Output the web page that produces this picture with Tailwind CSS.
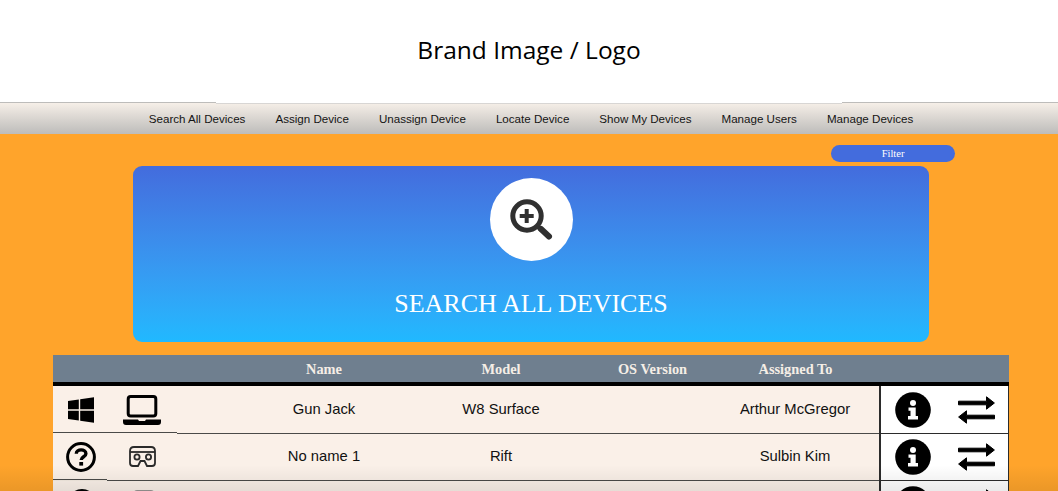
<!DOCTYPE html>
<html>
<head>
<meta charset="utf-8">
<script src="https://cdn.jsdelivr.net/npm/@tailwindcss/browser@4"></script>
</head>
<body class="w-[1058px] h-[491px] overflow-hidden bg-white relative">
<header class="h-[102px] flex items-center justify-center pb-[2px] font-['Open_Sans',sans-serif] text-[24.5px] leading-none text-black">Brand Image / Logo</header>
<nav class="relative h-[32px] bg-gradient-to-b from-[#f6efe8] to-[#bdbcba] border-t border-white flex items-center justify-center gap-[30px] pt-[1px] pl-[4px] font-['Liberation_Sans',sans-serif] text-[11.6px] text-[#141414]">
  <i class="absolute left-0 top-[-1px] w-[216px] h-px bg-[#bdbcba]"></i>
  <i class="absolute right-0 top-[-1px] w-[216px] h-px bg-[#bdbcba]"></i>
  <i class="absolute left-[216px] right-[216px] top-0 h-px bg-[#d8d6d4]"></i>
  <span>Search All Devices</span><span>Assign Device</span><span>Unassign Device</span><span>Locate Device</span><span>Show My Devices</span><span>Manage Users</span><span>Manage Devices</span>
</nav>
<main class="h-[357px] overflow-hidden bg-[#ffa42b] flex flex-col">
  <div class="shrink-0 h-[32px] pt-[11px] pl-[831px]">
    <button class="block w-[124px] h-[17px] rounded-full bg-[#436cdd] text-white font-['Liberation_Serif',serif] text-[10.5px] leading-[15px] text-center">Filter</button>
  </div>
  <section class="shrink-0 ml-[133px] w-[796px] h-[176px] rounded-[9px] bg-gradient-to-b from-[#436cdd] to-[#20b9ff] flex flex-col items-center">
    <div class="mt-[12px] w-[83px] h-[83px] rounded-full bg-white flex items-center justify-center">
      <svg class="w-[46px] h-[46px]" viewBox="0 0 46 46" fill="none" stroke="#303030">
        <circle cx="19" cy="19" r="14.2" stroke-width="5"/>
        <path d="M29 29 L33 33" stroke-width="4"/>
        <path d="M33 32 L41 39.5" stroke-width="6" stroke-linecap="round"/>
        <path d="M18.7 12 V26 M11.7 19 H25.7" stroke-width="4"/>
      </svg>
    </div>
    <h1 class="mt-[27px] font-['Liberation_Serif',serif] text-[26px] leading-[32px] text-white">SEARCH ALL DEVICES</h1>
  </section>
  <section class="shrink-0 ml-[53px] mt-[13px] w-[956px]">
    <div class="h-[27px] bg-[#6f7f8f] font-['Liberation_Serif',serif] font-bold text-[14.4px] leading-[29px] text-[#f5eee6]">
      <div class="grid grid-cols-[190px_162px_192px_111px_172px] text-center">
        <span></span><span>Name</span><span>Model</span><span>OS Version</span><span class="pl-[3px]">Assigned To</span>
      </div>
    </div>
    <div class="h-[4px] bg-black"></div>
    <div class="font-['Liberation_Sans',sans-serif] text-[14.8px] text-[#111]">

      <div class="grid grid-cols-[826px_130px] h-[48px]">
        <div class="relative bg-[#faf0e8] border-b border-[#4a4a48] grid grid-cols-[55px_68px_67px_162px_192px_111px_171px] items-center text-center">
          <i class="absolute left-0 bottom-[-1px] w-[124px] h-[2px] border-t border-[#4a4a48] bg-[#faf0e8]"></i>
          <div class="flex justify-center pl-[1px]">
            <svg class="w-[26px] h-[26px]" viewBox="0 0 26 26" fill="#000"><path d="M0 4 L10.8 2.6 V12.3 H0Z M12.2 2.3 L26 .3 V12.3 H12.2Z M0 13.7 H10.8 V23.4 L0 22Z M12.2 13.7 H26 V25.7 L12.2 23.7Z"/></svg>
          </div>
          <div class="flex justify-center">
            <svg class="w-[38px] h-[30px]" viewBox="0 0 38 30" fill="none" stroke="#000"><rect x="5.2" y="1.5" width="27.6" height="19.5" rx="2.5" stroke-width="3"/><path d="M0 24.5 H15 L16 26 H22 L23 24.5 H38 V27 Q38 30 35 30 H3 Q0 30 0 27Z" fill="#000" stroke="none"/></svg>
          </div>
          <span></span><span>Gun Jack</span><span>W8 Surface</span><span></span><span class="pl-[3px]">Arthur McGregor</span>
        </div>
        <div class="bg-white border-l-2 border-r border-b border-[#2b2b2b] flex items-center">
          <svg class="ml-[14px] w-[36px] h-[36px]" viewBox="0 0 36 36"><circle cx="18" cy="18" r="17.8" fill="#000"/><circle cx="18" cy="11" r="3" fill="#fff"/><path d="M13.5 15.5 H20.7 V24 H23 V27.4 H13 V24 H15.5 V18.8 H13.5Z" fill="#fff"/></svg>
          <svg class="ml-[27px] w-[37px] h-[28px]" viewBox="0 0 37 28" fill="#000" stroke="#000" stroke-linejoin="round"><path d="M.5 5.2 H28.5 V.8 L36.4 7 L28.5 13.2 V8.8 H.5Z M36.5 19.2 H8.5 V14.8 L.6 21 L8.5 27.2 V22.8 H36.5Z"/></svg>
        </div>
      </div>

      <div class="grid grid-cols-[826px_130px] h-[47px]">
        <div class="relative bg-[#faf0e8] border-b border-[#4a4a48] pb-[1px] grid grid-cols-[55px_68px_67px_162px_192px_111px_171px] items-center text-center">
          <i class="absolute left-0 bottom-[-1px] w-[54px] h-[2px] border-t border-[#4a4a48] bg-[#f3eae0]"></i>
          <div class="flex justify-center pl-[1px]">
            <svg class="w-[30px] h-[30px]" viewBox="0 0 30 30" fill="none" stroke="#000"><circle cx="15" cy="15" r="13.4" stroke-width="3"/><path d="M10.3 11.8 C10.3 6.6 19.9 6.6 19.9 11.8 C19.9 14.8 15.2 14.8 15.2 18" stroke-width="3.4"/><rect x="13.3" y="20" width="3.8" height="3.6" fill="#000" stroke="none"/></svg>
          </div>
          <div class="flex justify-center">
            <svg class="w-[27px] h-[21px]" viewBox="0 0 27 21" fill="none" stroke="#2a2a2a" stroke-width="1.8"><path d="M1 5 Q1 1 5 1 H22 Q26 1 26 5 V17 Q26 20 23 20 H18 L15.5 15 H11.5 L9 20 H4 Q1 20 1 17Z"/><path d="M1 6 H26"/><circle cx="8" cy="11" r="2.6"/><circle cx="19.5" cy="11" r="2.6"/></svg>
          </div>
          <span></span><span>No name 1</span><span>Rift</span><span></span><span class="pl-[3px]">Sulbin Kim</span>
        </div>
        <div class="bg-white border-l-2 border-r border-b border-[#2b2b2b] pb-[1px] flex items-center">
          <svg class="ml-[14px] w-[36px] h-[36px]" viewBox="0 0 36 36"><circle cx="18" cy="18" r="17.8" fill="#000"/><circle cx="18" cy="11" r="3" fill="#fff"/><path d="M13.5 15.5 H20.7 V24 H23 V27.4 H13 V24 H15.5 V18.8 H13.5Z" fill="#fff"/></svg>
          <svg class="ml-[27px] w-[37px] h-[28px]" viewBox="0 0 37 28" fill="#000" stroke="#000" stroke-linejoin="round"><path d="M.5 5.2 H28.5 V.8 L36.4 7 L28.5 13.2 V8.8 H.5Z M36.5 19.2 H8.5 V14.8 L.6 21 L8.5 27.2 V22.8 H36.5Z"/></svg>
        </div>
      </div>

      <div class="grid grid-cols-[826px_130px] h-[10px] overflow-hidden">
        <div class="bg-[#faf0e8] flex items-start overflow-hidden">
          <svg class="ml-[14px] mt-[8px] w-[30px] h-[30px] shrink-0" viewBox="0 0 30 30" fill="none" stroke="#000"><circle cx="15" cy="15" r="13.4" stroke-width="3"/></svg>
          <svg class="ml-[36px] mt-[9px] w-[22px] h-[30px] shrink-0" viewBox="0 0 22 30" fill="none" stroke="#777" stroke-width="1.5"><rect x="1" y="1" width="20" height="28" rx="3"/></svg>
        </div>
        <div class="bg-white border-l-2 border-r border-[#2b2b2b] flex items-start overflow-hidden">
          <svg class="ml-[14px] mt-[5px] w-[36px] h-[36px] shrink-0" viewBox="0 0 36 36"><circle cx="18" cy="18" r="17.8" fill="#000"/></svg>
          <svg class="ml-[27px] mt-[8px] w-[37px] h-[28px] shrink-0" viewBox="0 0 37 28" fill="#000" stroke="#000" stroke-linejoin="round"><path d="M.5 5.2 H28.5 V.8 L36.4 7 L28.5 13.2 V8.8 H.5Z"/></svg>
        </div>
      </div>
    </div>
  </section>
</main>
<div class="absolute left-0 right-0 bottom-0 h-[26px] bg-gradient-to-b from-transparent to-black/8 pointer-events-none"></div>
</body>
</html>
